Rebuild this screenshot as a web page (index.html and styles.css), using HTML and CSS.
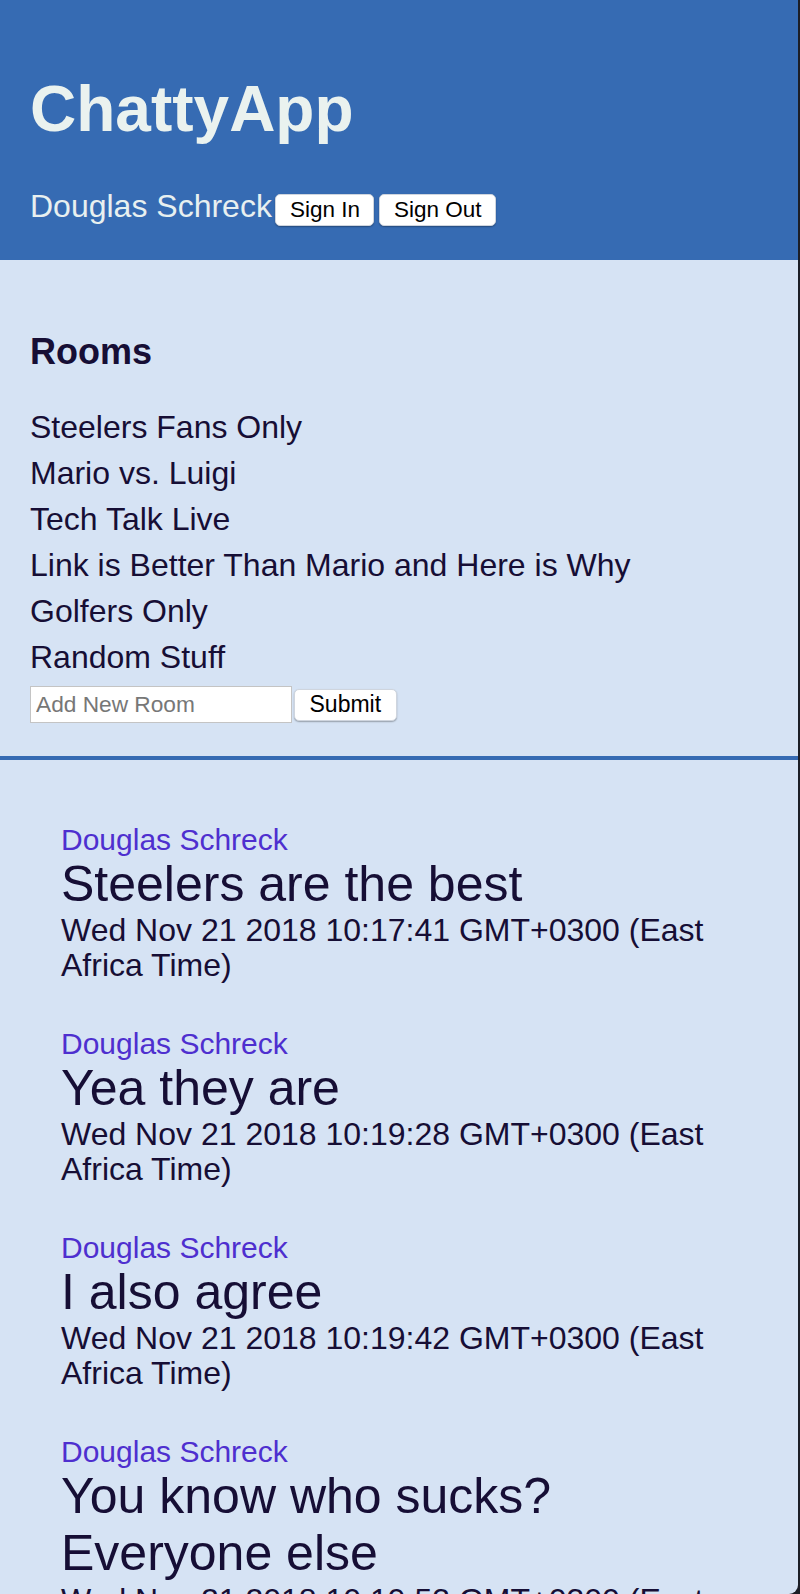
FILE: index.html
```html
<!DOCTYPE html>
<html lang="en">
<head>
<meta charset="utf-8">
<title>ChattyApp</title>
<link rel="stylesheet" href="styles.css">
</head>
<body>
<div class="window">
  <header class="topbar">
    <h1 class="brand">ChattyApp</h1>
    <div class="user-row">
      <span class="user-name">Douglas Schreck</span>
      <div class="auth-buttons">
        <button class="btn" type="button">Sign In</button>
        <button class="btn" type="button">Sign Out</button>
      </div>
    </div>
  </header>

  <section class="rooms">
    <h2 class="rooms-title">Rooms</h2>
    <ul class="room-list">
      <li>Steelers Fans Only</li>
      <li>Mario vs. Luigi</li>
      <li>Tech Talk Live</li>
      <li>Link is Better Than Mario and Here is Why</li>
      <li>Golfers Only</li>
      <li>Random Stuff</li>
    </ul>
    <form class="room-form">
      <input class="room-input" type="text" placeholder="Add New Room">
      <button class="btn btn-submit" type="button">Submit</button>
    </form>
  </section>

  <section class="messages">
    <div class="message">
      <div class="author">Douglas Schreck</div>
      <div class="content">Steelers are the best</div>
      <div class="sent">Wed Nov 21 2018 10:17:41 GMT+0300 (East Africa Time)</div>
    </div>
    <div class="message">
      <div class="author">Douglas Schreck</div>
      <div class="content">Yea they are</div>
      <div class="sent">Wed Nov 21 2018 10:19:28 GMT+0300 (East Africa Time)</div>
    </div>
    <div class="message">
      <div class="author">Douglas Schreck</div>
      <div class="content">I also agree</div>
      <div class="sent">Wed Nov 21 2018 10:19:42 GMT+0300 (East Africa Time)</div>
    </div>
    <div class="message">
      <div class="author">Douglas Schreck</div>
      <div class="content">You know who sucks? Everyone else</div>
      <div class="sent">Wed Nov 21 2018 10:19:53 GMT+0300 (East Africa Time)</div>
    </div>
  </section>
</div>
</body>
</html>
```

FILE: styles.css
```css
html {
  background: #1c1e26;
}

body {
  margin: 0;
  font-family: "Liberation Sans", Arial, Helvetica, sans-serif;
  color: #160e35;
}

.window {
  width: 798px;
  height: 100vh;
  overflow: hidden;
  background: #d6e3f4;
  border-bottom-right-radius: 9px;
}

.topbar {
  background: #366bb3;
  padding: 72px 30px 34px;
  color: #e8f0f0;
}

.brand {
  margin: 0 0 42px;
  font-size: 64px;
  line-height: 74px;
  font-weight: bold;
  color: #eaf2ef;
}

.user-row {
  display: flex;
  align-items: baseline;
}

.user-name {
  font-size: 32px;
  line-height: 37px;
  margin-right: 3.5px;
}

.auth-buttons {
  display: flex;
  align-items: baseline;
  gap: 5px;
}

.btn {
  font-family: "Liberation Sans", Arial, Helvetica, sans-serif;
  font-size: 22.5px;
  height: 32px;
  padding: 0 13.5px;
  background: #ffffff;
  color: #000000;
  border: 1px solid #cfd5de;
  border-radius: 5px;
  box-shadow: 0 1px 1.5px rgba(0, 0, 0, 0.3);
}

.btn-submit {
  font-size: 23px;
  padding: 0 14.5px;
}

.rooms {
  padding: 71px 30px 32.7px;
  border-bottom: 4px solid #366bb3;
}

.rooms-title {
  margin: 0 0 31.6px;
  font-size: 36px;
  line-height: 41px;
  font-weight: bold;
}

.room-list {
  margin: 0;
  padding: 0;
  list-style: none;
}

.room-list li {
  font-size: 32px;
  line-height: 46px;
}

.room-form {
  margin: 6.4px 0 0;
  display: flex;
  align-items: center;
  gap: 2px;
}

.room-input {
  box-sizing: border-box;
  width: 262px;
  height: 37.3px;
  padding: 0 5px;
  border: 1px solid #c4c4c4;
  background: #ffffff;
  font-family: "Liberation Sans", Arial, Helvetica, sans-serif;
  font-size: 22.7px;
  color: #000000;
}

.room-input::placeholder {
  color: #777777;
}

.messages {
  padding: 63.6px 61px 0;
  display: flex;
  flex-direction: column;
  gap: 44.5px;
}

.author {
  font-size: 30px;
  line-height: 32px;
  color: #4e2fcf;
}

.content {
  font-size: 50px;
  line-height: 57.5px;
}

.sent {
  font-size: 32px;
  line-height: 35px;
}
```
